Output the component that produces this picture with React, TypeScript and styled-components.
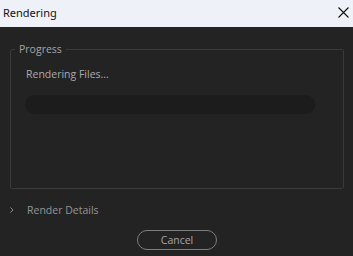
import React from 'react';
import styled, { createGlobalStyle } from 'styled-components';

const GlobalStyle = createGlobalStyle`
	html, body {
		margin: 0;
		padding: 0;
		background: #232323;
	}
	* {
		box-sizing: border-box;
	}
`;

const App = () => {
	return (
		<>
			<GlobalStyle />
			<Dialog>
				<TitleBar>
					<Title>Rendering</Title>
					<CloseButton aria-label="Close">
						<svg width="11" height="11" viewBox="0 0 11 11">
							<path d="M0.5 0.5 L10.5 10.5 M10.5 0.5 L0.5 10.5" stroke="#111" strokeWidth="1.1" />
						</svg>
					</CloseButton>
				</TitleBar>
				<Body>
					<Group>
						<Legend>Progress</Legend>
						<Status>Rendering Files...</Status>
						<Track />
					</Group>
					<DetailsRow>
						<Chevron>
							<svg width="4" height="6" viewBox="0 0 4 6">
								<path d="M0.5 0.5 L3 3 L0.5 5.5" stroke="#8c8c8c" strokeWidth="1" fill="none" />
							</svg>
						</Chevron>
						<DetailsLabel>Render Details</DetailsLabel>
					</DetailsRow>
					<Footer>
						<CancelButton>Cancel</CancelButton>
					</Footer>
				</Body>
			</Dialog>
		</>
	);
};

export default App;

const Dialog = styled.div`
	width: 353px;
	height: 256px;
	display: flex;
	flex-direction: column;
	background: #232323;
	overflow: hidden;
`;

const TitleBar = styled.div`
	height: 27px;
	flex: none;
	display: flex;
	align-items: center;
	justify-content: space-between;
	background: #eef2f8;
	padding: 0 4px 2px 3px;
`;

const Title = styled.div`
	font-family: 'Noto Sans', 'Open Sans', sans-serif;
	font-size: 11px;
	color: #111;
`;

const CloseButton = styled.div`
	display: flex;
	width: 11px;
	height: 11px;
`;

const Body = styled.div`
	flex: 1;
	display: flex;
	flex-direction: column;
	padding: 15px 9px 0 10px;
	font-family: 'Open Sans', 'Noto Sans', sans-serif;
	font-size: 10.5px;
`;

const Group = styled.fieldset`
	margin: 0;
	padding: 0 14px 0 14px;
	height: 147px;
	border: 1px solid #3a3a3a;
	border-radius: 2px;
`;

const Legend = styled.legend`
	margin-left: -10px;
	padding: 0 4px;
	line-height: 14px;
	color: #a3a3a3;
`;

const Status = styled.div`
	margin-top: 11px;
	line-height: 14px;
	color: #ababab;
	padding-left: 1px;
`;

const Track = styled.div`
	margin-top: 14px;
	width: 290px;
	height: 19px;
	border-radius: 10px;
	background: #1c1c1c;
`;

const DetailsRow = styled.div`
	margin-top: 13px;
	height: 16px;
	display: flex;
	align-items: center;
`;

const Chevron = styled.div`
	width: 17px;
	display: flex;
	align-items: center;
`;

const DetailsLabel = styled.div`
	color: #959595;
	line-height: 16px;
`;

const Footer = styled.div`
	margin-top: 12px;
	display: flex;
	justify-content: center;
`;

const CancelButton = styled.button`
	width: 80px;
	height: 20px;
	border: 1px solid #7c7c7c;
	border-radius: 10px;
	background: transparent;
	color: #a6a6a6;
	font-family: 'Open Sans', 'Noto Sans', sans-serif;
	font-size: 10.5px;
	padding: 0;
`;
